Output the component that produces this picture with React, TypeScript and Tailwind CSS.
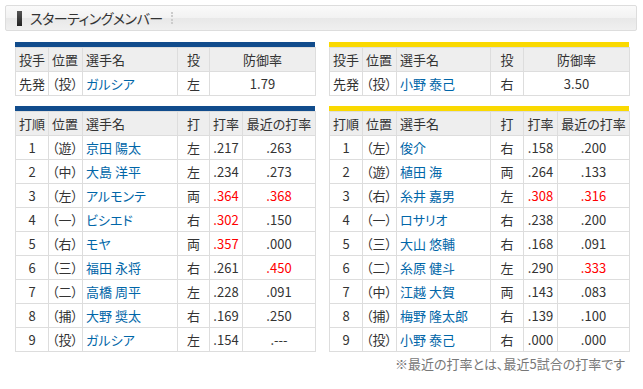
import React from "react";

type Batter = [string, string, string, string, string, string, boolean, boolean];

const dragonsPitcher = ["先発", "（投）", "ガルシア", "左", "1.79"];
const tigersPitcher = ["先発", "（投）", "小野 泰己", "右", "3.50"];

const dragons: Batter[] = [
  ["1", "（遊）", "京田 陽太", "左", ".217", ".263", false, false],
  ["2", "（中）", "大島 洋平", "左", ".234", ".273", false, false],
  ["3", "（左）", "アルモンテ", "両", ".364", ".368", true, true],
  ["4", "（一）", "ビシエド", "右", ".302", ".150", true, false],
  ["5", "（右）", "モヤ", "両", ".357", ".000", true, false],
  ["6", "（三）", "福田 永将", "右", ".261", ".450", false, true],
  ["7", "（二）", "高橋 周平", "左", ".228", ".091", false, false],
  ["8", "（捕）", "大野 奨太", "右", ".169", ".250", false, false],
  ["9", "（投）", "ガルシア", "左", ".154", ".---", false, false],
];

const tigers: Batter[] = [
  ["1", "（左）", "俊介", "右", ".158", ".200", false, false],
  ["2", "（遊）", "植田 海", "両", ".264", ".133", false, false],
  ["3", "（右）", "糸井 嘉男", "左", ".308", ".316", true, true],
  ["4", "（一）", "ロサリオ", "右", ".238", ".200", false, false],
  ["5", "（三）", "大山 悠輔", "右", ".168", ".091", false, false],
  ["6", "（二）", "糸原 健斗", "左", ".290", ".333", false, true],
  ["7", "（中）", "江越 大賀", "両", ".143", ".083", false, false],
  ["8", "（捕）", "梅野 隆太郎", "右", ".139", ".100", false, false],
  ["9", "（投）", "小野 泰己", "右", ".000", ".000", false, false],
];

const cell = "h-[24px] border border-[#dddddd] px-[3px] py-0 leading-none whitespace-nowrap";
const head = cell + " bg-[#eeeeee] font-normal";

function PitcherTable({ row, bar, widths }: { row: string[]; bar: string; widths: number[] }) {
  return (
    <div className="w-[300px]">
      <div className={`h-[5px] ${bar}`} />
      <table className="w-[300px] table-fixed border-collapse">
        <colgroup>
          {widths.map((w, i) => (
            <col key={i} style={{ width: w }} />
          ))}
        </colgroup>
        <thead>
          <tr>
            <th className={head + " text-left"}>投手</th>
            <th className={head + " text-left"}>位置</th>
            <th className={head + " text-left"}>選手名</th>
            <th className={head + " text-center"}>投</th>
            <th className={head + " text-center"}>防御率</th>
          </tr>
        </thead>
        <tbody>
          <tr>
            <td className={cell + " text-left"}>{row[0]}</td>
            <td className={cell + " text-left"}>{row[1]}</td>
            <td className={cell + " text-left text-[#0066a8]"}>{row[2]}</td>
            <td className={cell + " text-center"}>{row[3]}</td>
            <td className={cell + " text-center"}>{row[4]}</td>
          </tr>
        </tbody>
      </table>
    </div>
  );
}

function BattingTable({ rows, bar, widths }: { rows: Batter[]; bar: string; widths: number[] }) {
  return (
    <div className="w-[300px]">
      <div className={`h-[5px] ${bar}`} />
      <table className="w-[300px] table-fixed border-collapse">
        <colgroup>
          {widths.map((w, i) => (
            <col key={i} style={{ width: w }} />
          ))}
        </colgroup>
        <thead>
          <tr>
            <th className={head + " text-left"}>打順</th>
            <th className={head + " text-left"}>位置</th>
            <th className={head + " text-left"}>選手名</th>
            <th className={head + " text-center"}>打</th>
            <th className={head + " text-center"}>打率</th>
            <th className={head + " text-center"}>最近の打率</th>
          </tr>
        </thead>
        <tbody>
          {rows.map((r) => (
            <tr key={r[0]}>
              <td className={cell + " text-center"}>{r[0]}</td>
              <td className={cell + " text-left"}>{r[1]}</td>
              <td className={cell + " text-left text-[#0066a8]"}>{r[2]}</td>
              <td className={cell + " text-center"}>{r[3]}</td>
              <td className={cell + " text-center " + (r[6] ? "text-[#ff0000]" : "")}>{r[4]}</td>
              <td className={cell + " text-center " + (r[7] ? "text-[#ff0000]" : "")}>{r[5]}</td>
            </tr>
          ))}
        </tbody>
      </table>
    </div>
  );
}

export default function App() {
  return (
    <div className="h-[389px] w-[643px] bg-white pt-[5px] text-[13px] text-[#333333] [font-family:'Noto_Sans_CJK_JP','Noto_Sans',sans-serif] [font-feature-settings:'palt']">
      <div className="ml-[5px] flex h-[26px] w-[632px] items-center rounded-[2px] border border-[#dddddd] bg-[linear-gradient(#fafafa_0%,#f2f2f2_50%,#e8e8e8_51%,#f0f0f0_100%)]">
        <div className="ml-[11px] h-[15px] w-[5px] bg-[linear-gradient(#555555,#222222)]" />
        <div className="ml-[8px] text-[14px] leading-none tracking-[-0.5px] text-[#333333]">スターティングメンバー</div>
        <div className="ml-[8px] h-[12px] border-l-2 border-dotted border-[#cccccc]" />
      </div>

      <div className="ml-[15px] mt-[11px] flex gap-[14px]">
        <PitcherTable row={dragonsPitcher} bar="bg-[#114c8c]" widths={[33, 34, 95, 32, 106]} />
        <PitcherTable row={tigersPitcher} bar="bg-[#fad900]" widths={[33, 34, 94, 33, 106]} />
      </div>

      <div className="ml-[15px] mt-[10px] flex gap-[14px]">
        <BattingTable rows={dragons} bar="bg-[#114c8c]" widths={[33, 34, 95, 32, 33, 73]} />
        <BattingTable rows={tigers} bar="bg-[#fad900]" widths={[33, 34, 94, 33, 34, 72]} />
      </div>

      <div className="mr-[18px] mt-[5px] text-right text-[13px] leading-none text-[#777777]">
        ※最近の打率とは、最近5試合の打率です
      </div>
    </div>
  );
}
